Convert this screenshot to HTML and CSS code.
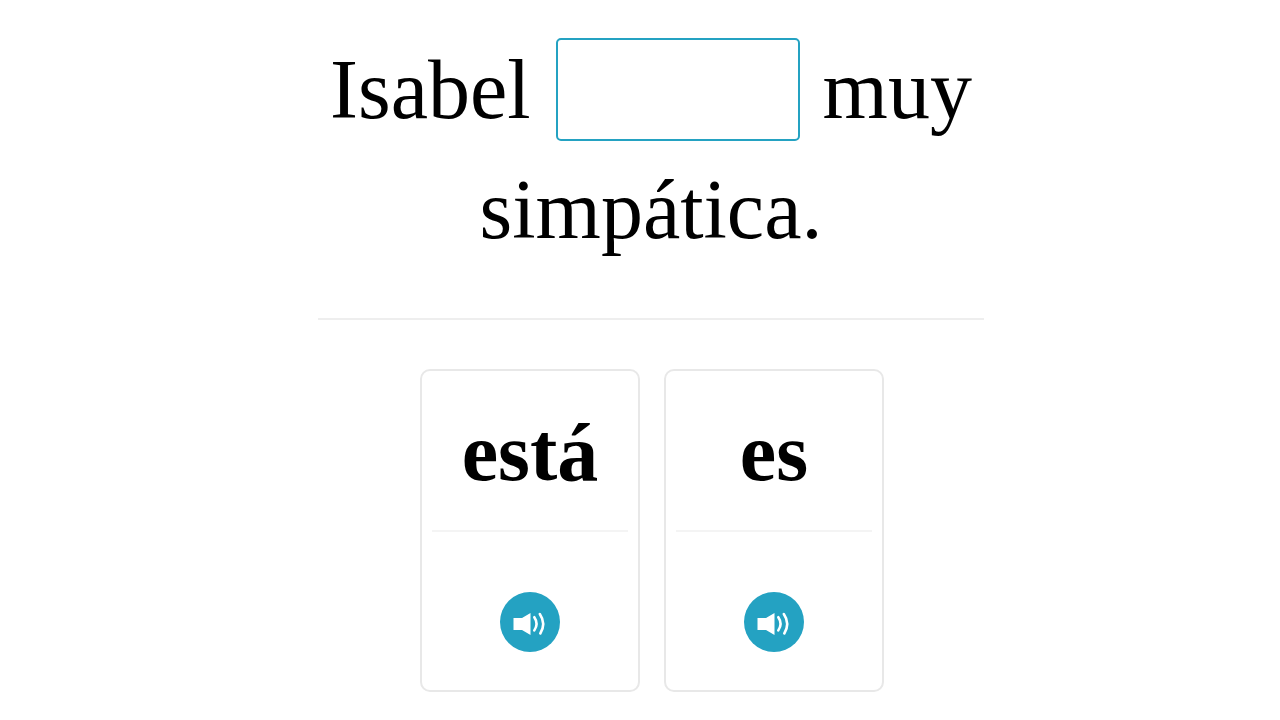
FILE: index.html
```html
<!DOCTYPE html>
<html lang="es">
<head>
<meta charset="UTF-8">
<meta name="viewport" content="width=device-width, initial-scale=1.0">
<title>Isabel es muy simpática</title>
<link rel="stylesheet" href="styles.css">
</head>
<body>

<main class="exercise">
  <p class="sentence">
    <span>Isabel</span>
    <input class="blank" type="text" aria-label="Missing word">
    <span>muy</span>
    <span>simpática.</span>
  </p>

  <div class="choices">
    <div class="card">
      <button class="word" type="button">está</button>
      <div class="sound">
        <button class="play" type="button" aria-label="Listen to está">
          <svg viewBox="0 0 60 60" width="60" height="60">
            <path d="M13.500 26h8.500l8.500-5v22l-8.500-5h-8.500z" fill="#fff"/>
            <path d="M34.300 25.200q4.500 6.500 0 13.200M39.800 22q6.500 9.500 0.500 19.500" fill="none" stroke="#fff" stroke-width="2.600" stroke-linecap="round"/>
          </svg>
        </button>
      </div>
    </div>

    <div class="card">
      <button class="word" type="button">es</button>
      <div class="sound">
        <button class="play" type="button" aria-label="Listen to es">
          <svg viewBox="0 0 60 60" width="60" height="60">
            <path d="M13.500 26h8.500l8.500-5v22l-8.500-5h-8.500z" fill="#fff"/>
            <path d="M34.300 25.200q4.500 6.500 0 13.200M39.800 22q6.500 9.500 0.500 19.500" fill="none" stroke="#fff" stroke-width="2.600" stroke-linecap="round"/>
          </svg>
        </button>
      </div>
    </div>
  </div>
</main>

</body>
</html>
```
FILE: styles.css
```css
* {
  box-sizing: border-box;
}
body {
  margin: 0;
  padding-left: 22px;
  background: #fff;
  color: #000;
  font-family: "Liberation Serif", "Times New Roman", serif;
}
.exercise {
  width: 53%;
  min-width: 660px;
  margin: 0 auto;
  padding: 30px 0 28px;
}
.sentence {
  margin: 0;
  padding-bottom: 48px;
  border-bottom: 2px solid #eee;
  font-size: 84px;
  line-height: 120px;
  text-align: center;
}
.blank {
  width: 244px;
  height: 103px;
  margin: 8px 2px 0 4px;
  padding: 0;
  border: 2px solid #24a2c2;
  border-radius: 5px;
  font: inherit;
  line-height: 1;
  text-align: center;
  vertical-align: top;
}
.choices {
  display: flex;
  justify-content: center;
  gap: 24px;
  padding: 49px 0 0 2px;
}
.card {
  width: 220px;
  padding: 0 10px;
  border: 2px solid #e8e8e8;
  border-radius: 10px;
}
.word {
  display: block;
  width: 100%;
  height: 161px;
  padding: 4px 0 0;
  border: none;
  border-bottom: 2px solid #f4f4f4;
  background: none;
  color: inherit;
  font: inherit;
  font-size: 82px;
  font-weight: bold;
  cursor: pointer;
}
.sound {
  padding: 60px 0 38px;
  text-align: center;
}
.play {
  display: block;
  width: 60px;
  height: 60px;
  margin: 0 auto;
  padding: 0;
  border: none;
  border-radius: 50%;
  background: #24a2c2;
  cursor: pointer;
}
.play svg {
  display: block;
}
```
